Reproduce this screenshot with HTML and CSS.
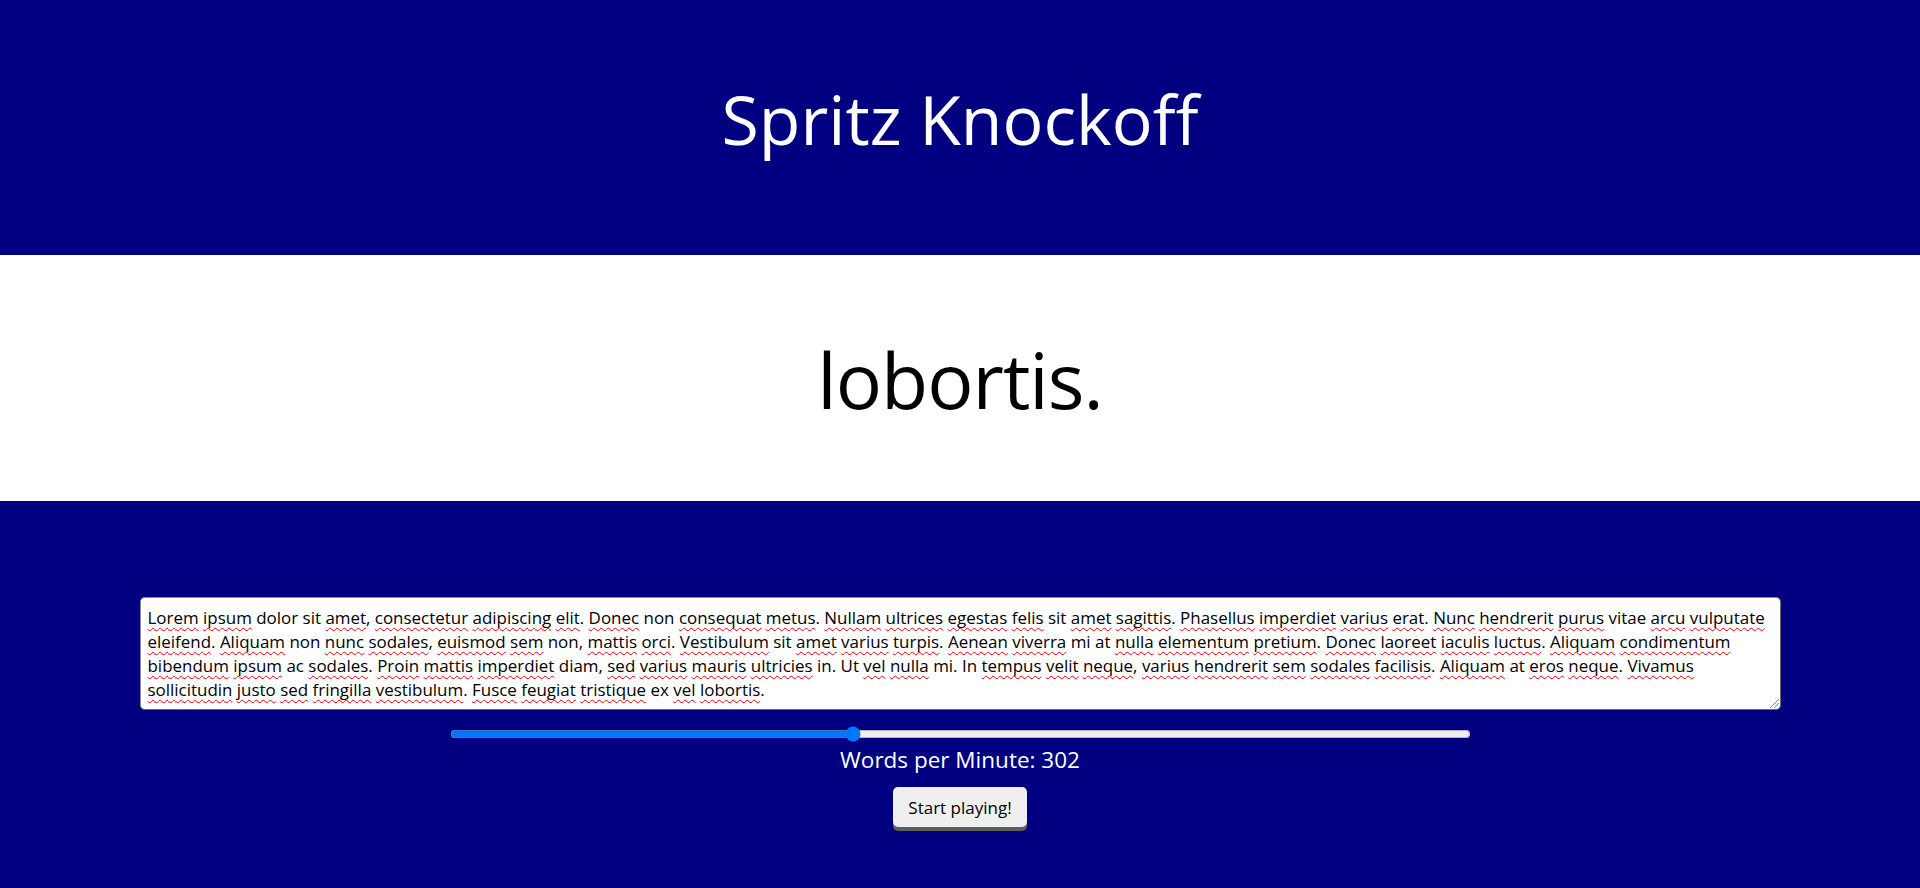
FILE: index.html
```html
<!DOCTYPE html>
<html lang="en">
<head>
<meta charset="utf-8">
<title>Spritz Knockoff</title>
<link rel="stylesheet" href="styles.css">
</head>
<body>
<header class="masthead">
  <h1 class="title">Spritz Knockoff</h1>
</header>
<section class="reader">
  <div class="word">lobortis.</div>
</section>
<main class="controls">
  <div class="textbox" role="textbox" aria-multiline="true">
    <div class="line"><span class="sp">Lorem</span> <span class="sp">ipsum</span> dolor sit <span class="sp">amet</span>, <span class="sp">consectetur</span> <span class="sp">adipiscing</span> <span class="sp">elit</span>. <span class="sp">Donec</span> non <span class="sp">consequat</span> <span class="sp">metus</span>. <span class="sp">Nullam</span> <span class="sp">ultrices</span> <span class="sp">egestas</span> <span class="sp">felis</span> sit <span class="sp">amet</span> <span class="sp">sagittis</span>. <span class="sp">Phasellus</span> <span class="sp">imperdiet</span> <span class="sp">varius</span> <span class="sp">erat</span>. <span class="sp">Nunc</span> <span class="sp">hendrerit</span> <span class="sp">purus</span> vitae <span class="sp">arcu</span> <span class="sp">vulputate</span></div>
    <div class="line"><span class="sp">eleifend</span>. <span class="sp">Aliquam</span> non <span class="sp">nunc</span> <span class="sp">sodales</span>, <span class="sp">euismod</span> <span class="sp">sem</span> non, <span class="sp">mattis</span> <span class="sp">orci</span>. <span class="sp">Vestibulum</span> sit <span class="sp">amet</span> <span class="sp">varius</span> <span class="sp">turpis</span>. <span class="sp">Aenean</span> <span class="sp">viverra</span> mi at <span class="sp">nulla</span> <span class="sp">elementum</span> <span class="sp">pretium</span>. <span class="sp">Donec</span> <span class="sp">laoreet</span> <span class="sp">iaculis</span> <span class="sp">luctus</span>. <span class="sp">Aliquam</span> <span class="sp">condimentum</span></div>
    <div class="line"><span class="sp">bibendum</span> <span class="sp">ipsum</span> ac <span class="sp">sodales</span>. <span class="sp">Proin</span> <span class="sp">mattis</span> <span class="sp">imperdiet</span> diam, <span class="sp">sed</span> <span class="sp">varius</span> <span class="sp">mauris</span> <span class="sp">ultricies</span> in. Ut <span class="sp">vel</span> <span class="sp">nulla</span> mi. In <span class="sp">tempus</span> <span class="sp">velit</span> <span class="sp">neque</span>, <span class="sp">varius</span> <span class="sp">hendrerit</span> <span class="sp">sem</span> <span class="sp">sodales</span> <span class="sp">facilisis</span>. <span class="sp">Aliquam</span> at <span class="sp">eros</span> <span class="sp">neque</span>. <span class="sp">Vivamus</span></div>
    <div class="line"><span class="sp">sollicitudin</span> <span class="sp">justo</span> <span class="sp">sed</span> <span class="sp">fringilla</span> <span class="sp">vestibulum</span>. <span class="sp">Fusce</span> <span class="sp">feugiat</span> <span class="sp">tristique</span> ex <span class="sp">vel</span> <span class="sp">lobortis</span>.</div>
    <span class="grip" aria-hidden="true"></span>
  </div>
  <input class="speed" type="range" min="50" max="690" value="302" aria-label="Words per minute">
  <p class="wpm">Words per Minute: 302</p>
  <button class="play" type="button">Start playing!</button>
</main>
</body>
</html>
```

FILE: styles.css
```css
html, body {
  margin: 0;
  padding: 0;
}

body {
  background: #000080;
  font-family: "Open Sans", "Noto Sans", sans-serif;
  min-height: 888px;
}

.masthead {
  height: 255px;
  display: flex;
  align-items: center;
  justify-content: center;
}

.title {
  margin: 0;
  color: #ffffff;
  font-weight: 400;
  font-size: 68px;
  line-height: 1;
  padding-bottom: 17px;
  letter-spacing: 0;
}

.reader {
  height: 246px;
  background: #ffffff;
  display: flex;
  align-items: center;
  justify-content: center;
}

.word {
  font-size: 77px;
  line-height: 1;
  color: #000000;
  padding-top: 2px;
  letter-spacing: -1px;
}

.controls {
  display: flex;
  flex-direction: column;
  align-items: center;
  padding-top: 96px;
}

.textbox {
  position: relative;
  box-sizing: border-box;
  width: 1641px;
  height: 113px;
  background: #ffffff;
  border: 1px solid #8a8a8a;
  border-right-color: #6b6b6b;
  border-bottom-color: #6b6b6b;
  border-radius: 5px;
  padding: 8px 7px 0;
  font-size: 16.95px;
  line-height: 24px;
  color: #000000;
  overflow: hidden;
}

.line {
  white-space: nowrap;
}

.sp {
  text-decoration: underline wavy #e00000;
  text-decoration-thickness: 1px;
  text-underline-offset: 3px;
  text-decoration-skip-ink: none;
}

.grip {
  position: absolute;
  right: 1px;
  bottom: 1px;
  width: 9px;
  height: 9px;
  background: linear-gradient(135deg,
    transparent 0 45%, #8a8a8a 45% 52%, transparent 52% 70%, #8a8a8a 70% 77%, transparent 77%);
}

.speed {
  display: block;
  width: 1021px;
  height: 16px;
  margin: 16px 0 0;
}

.wpm {
  margin: 2px 0 0;
  color: #ffffff;
  font-size: 22.5px;
  line-height: 32px;
}

.play {
  margin-top: 11px;
  box-sizing: border-box;
  width: 134px;
  height: 40px;
  padding: 0;
  border: none;
  border-radius: 5px;
  background: #efefef;
  box-shadow: 0 4px 0 #5e5e5e;
  color: #000000;
  font-family: "Open Sans", "Noto Sans", sans-serif;
  font-size: 17px;
  cursor: pointer;
}
```
